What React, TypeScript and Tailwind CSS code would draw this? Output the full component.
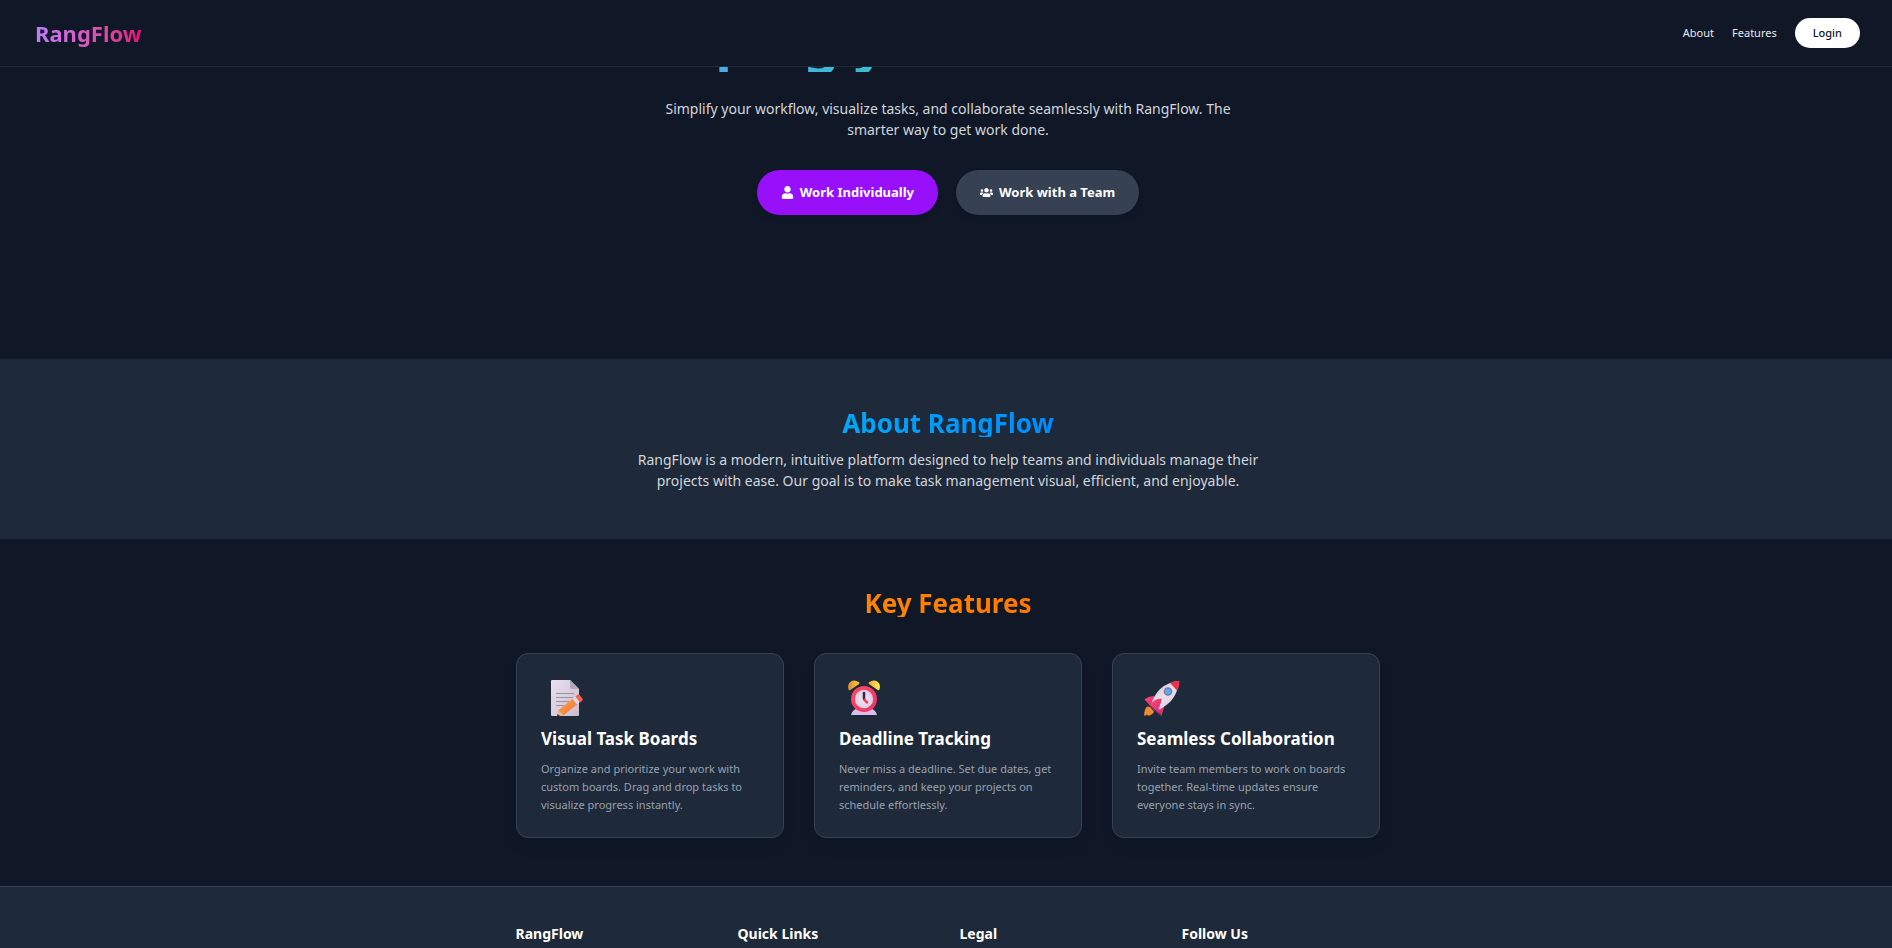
import React from "react";
import { FaUser, FaUsers } from "react-icons/fa";

function NoteIcon() {
  return (
    <svg viewBox="0 0 36 38" className="h-[38px] w-9" aria-hidden="true">
      <defs>
        <linearGradient id="paper" x1="0" y1="0" x2="1" y2="1">
          <stop offset="0" stopColor="#e9e2ee" />
          <stop offset="1" stopColor="#c9bccf" />
        </linearGradient>
        <linearGradient id="pencil" x1="0" y1="0" x2="1" y2="1">
          <stop offset="0" stopColor="#ffa24a" />
          <stop offset="1" stopColor="#ef7434" />
        </linearGradient>
      </defs>
      <path d="M4 1h18l9 9v26a1 1 0 0 1-1 1H4a1 1 0 0 1-1-1V2a1 1 0 0 1 1-1z" fill="url(#paper)" />
      <path d="M22 1l9 9h-7a2 2 0 0 1-2-2z" fill="#b3a7b9" />
      <path d="M8 14.500h18M8 18.500h17M8 22.500h13M8 26.500h8" stroke="#9d93a6" strokeWidth="1.200" />
      <path d="M10 31.500L25 19.500l4.500 5.500-13.500 11-6 1z" fill="url(#pencil)" />
      <path d="M10.500 31l5.500 5.500-6.500.5z" fill="#e3b99a" />
      <path d="M9.500 35l2.500 2H9z" fill="#5a2540" />
      <path d="M24.500 20l3-2.400 4.500 5.400-3 2.400z" fill="#ddd3ea" />
      <path d="M27.500 17.600l1.700-1.500q1.500-1.200 2.800.3l2.400 3q1 1.300-.4 2.500l-2 1.300z" fill="#f9604b" />
    </svg>
  );
}

function ClockIcon() {
  return (
    <svg viewBox="0 0 36 38" className="h-[38px] w-9" aria-hidden="true">
      <defs>
        <linearGradient id="bell" x1="0" y1="0" x2="1" y2="0">
          <stop offset="0" stopColor="#d98a35" />
          <stop offset="1" stopColor="#ffc83a" />
        </linearGradient>
        <linearGradient id="bellRight" x1="0" y1="0" x2="1" y2="0">
          <stop offset="0" stopColor="#f5a62f" />
          <stop offset="1" stopColor="#fff05a" />
        </linearGradient>
        <linearGradient id="rim" x1="0" y1="0" x2="1" y2="1">
          <stop offset="0" stopColor="#ff4a62" />
          <stop offset="1" stopColor="#ee2f6a" />
        </linearGradient>
        <radialGradient id="face">
          <stop offset="0" stopColor="#f7eef8" />
          <stop offset="1" stopColor="#dccbe2" />
        </radialGradient>
      </defs>
      <path d="M5 36q1-5 7-7h12q6 2 7 7z" fill="#d6c0e8" />
      <path d="M2.500 10.500Q1 5.500 4.500 2.800T13 3.200q1 .8 0 1.800L4.300 11q-1.300.8-1.800-.5z" fill="url(#bell)" />
      <path d="M33.500 10.500Q35 5.500 31.500 2.800T23 3.200q-1 .8 0 1.800l8.700 6q1.300.8 1.800-.5z" fill="url(#bellRight)" />
      <circle cx="18" cy="20" r="13" fill="url(#rim)" />
      <circle cx="18" cy="20" r="9.200" fill="url(#face)" />
      <path d="M18 14v6" stroke="#352b45" strokeWidth="2.600" strokeLinecap="round" />
      <path d="M18.500 20.800l2.500 2.500" stroke="#f43a5c" strokeWidth="2.600" strokeLinecap="round" />
    </svg>
  );
}

function RocketIcon() {
  return (
    <svg viewBox="0 0 36 38" className="h-[38px] w-9" aria-hidden="true">
      <defs>
        <linearGradient id="hull" x1="0" y1="0" x2="1" y2="1">
          <stop offset="0" stopColor="#cdbcc8" />
          <stop offset="0.500" stopColor="#eadfec" />
          <stop offset="1" stopColor="#d6c0e2" />
        </linearGradient>
        <linearGradient id="fin" x1="0" y1="0" x2="1" y2="1">
          <stop offset="0" stopColor="#ff4a70" />
          <stop offset="1" stopColor="#d92a78" />
        </linearGradient>
      </defs>
      <path d="M3 27.500q-3 3-2.800 9 1.500.5 3-1l.8 1.300Q9 36 10 32.500L6 28z" fill="#ee8b35" />
      <path d="M10 17q-5 0-9.500 3.200L6 27l4-1z" fill="url(#fin)" />
      <path d="M20 28l-2.500 9L10 31l2-4z" fill="url(#fin)" />
      <path d="M7 26Q13 5 34 2q1 18-18.500 28.500L10 31z" fill="url(#hull)" />
      <path d="M26 4Q31 1.500 35.300 2q.6 5-2.300 9.500z" fill="#ee2f4e" />
      <circle cx="24" cy="12.500" r="4.300" fill="#7f7896" />
      <circle cx="24" cy="12.500" r="3" fill="#5aa7f5" />
      <path d="M6 27q3-7.500 11.500-7.500 0 4-3 10.500l3.500 1.500-1.500 4z" fill="url(#fin)" />
      <path d="M5.500 26.500l11.500 9.500" stroke="#4b3568" strokeWidth="1" />
    </svg>
  );
}

const features = [
  {
    icon: <NoteIcon />,
    title: "Visual Task Boards",
    text: "Organize and prioritize your work with custom boards. Drag and drop tasks to visualize progress instantly.",
  },
  {
    icon: <ClockIcon />,
    title: "Deadline Tracking",
    text: "Never miss a deadline. Set due dates, get reminders, and keep your projects on schedule effortlessly.",
  },
  {
    icon: <RocketIcon />,
    title: "Seamless Collaboration",
    text: "Invite team members to work on boards together. Real-time updates ensure everyone stays in sync.",
  },
];

const footerColumns = ["RangFlow", "Quick Links", "Legal", "Follow Us"];

export default function App() {
  return (
    <div className="h-screen overflow-hidden bg-[#101828] font-['Noto_Sans','Open_Sans',sans-serif] text-white">
      <header className="relative z-10 flex h-[67px] items-center justify-between border-b border-[#1e2939] bg-[#101828] pr-8 pl-[35px]">
        <a href="#top" className="bg-linear-to-r from-[#c27aff] to-[#e60076] bg-clip-text text-[22px] leading-8 font-bold text-transparent">
          RangFlow
        </a>
        <nav className="flex items-center gap-[18px] text-[11px] text-gray-200">
          <a href="#about">About</a>
          <a href="#features">Features</a>
          <button className="h-[30px] rounded-full bg-white px-[18px] font-medium text-[#101828]">Login</button>
        </nav>
      </header>

      <main>
        <section id="top" className="flex h-[292px] flex-col items-center justify-end overflow-hidden pb-36 pl-1 text-center">
          <h1 className="shrink-0 bg-linear-to-r from-[#51a2ff] to-[#05df72] bg-clip-text text-[56px] leading-[64px] font-bold whitespace-nowrap text-transparent">
            Helping you build more
          </h1>
          <p className="mt-[26px] w-[605px] shrink-0 text-[14px] leading-[21px] text-gray-300">
            Simplify your workflow, visualize tasks, and collaborate seamlessly with RangFlow. The smarter way to get
            work done.
          </p>
          <div className="mt-[30px] flex shrink-0 gap-[18px] text-[13px] font-bold">
            <button className="flex h-[45px] items-center gap-[6px] rounded-full bg-[#9810fa] px-6 shadow-md">
              <FaUser className="size-[13px]" />
              Work Individually
            </button>
            <button className="flex h-[45px] items-center gap-[6px] rounded-full bg-[#364153] px-6 shadow-md">
              <FaUsers className="size-[13px]" />
              Work with a Team
            </button>
          </div>
        </section>

        <section id="about" className="flex h-[180px] flex-col items-center bg-[#1e2939] pt-[50px] pl-1 text-center">
          <h2 className="bg-linear-to-r from-[#00a8f8] to-[#008cff] bg-clip-text text-[26px] leading-[28px] font-bold text-transparent">
            About RangFlow
          </h2>
          <p className="mt-3 w-[648px] text-[14px] leading-[21px] text-gray-300">
            RangFlow is a modern, intuitive platform designed to help teams and individuals manage their projects with
            ease. Our goal is to make task management visual, efficient, and enjoyable.
          </p>
        </section>

        <section id="features" className="flex flex-col items-center pt-[50px] pb-12 pl-1">
          <h2 className="bg-linear-to-r from-[#ff8400] to-[#ff7800] bg-clip-text text-[26px] leading-[28px] font-bold text-transparent">
            Key Features
          </h2>
          <div className="mt-9 grid w-full max-w-[864px] grid-cols-3 gap-[30px]">
            {features.map((feature) => (
              <article key={feature.title} className="h-[185px] rounded-xl border border-[#364153] bg-[#1e2939] px-6 pt-[25px] shadow-lg">
                <div className="pl-[7px]">{feature.icon}</div>
                <h3 className="mt-[9px] text-[17px] leading-[25px] font-bold whitespace-nowrap">{feature.title}</h3>
                <p className="mt-[9px] text-[11px] leading-[18px] text-[#99a1af]">{feature.text}</p>
              </article>
            ))}
          </div>
        </section>
      </main>

      <footer className="flex justify-center border-t border-[#364153] bg-[#1e2939] pt-9 pb-12 pl-[3px]">
        <div className="grid w-full max-w-[864px] grid-cols-4 gap-6">
          {footerColumns.map((column) => (
            <h4 key={column} className="text-[14px] leading-[22px] font-bold">
              {column}
            </h4>
          ))}
        </div>
      </footer>
    </div>
  );
}
